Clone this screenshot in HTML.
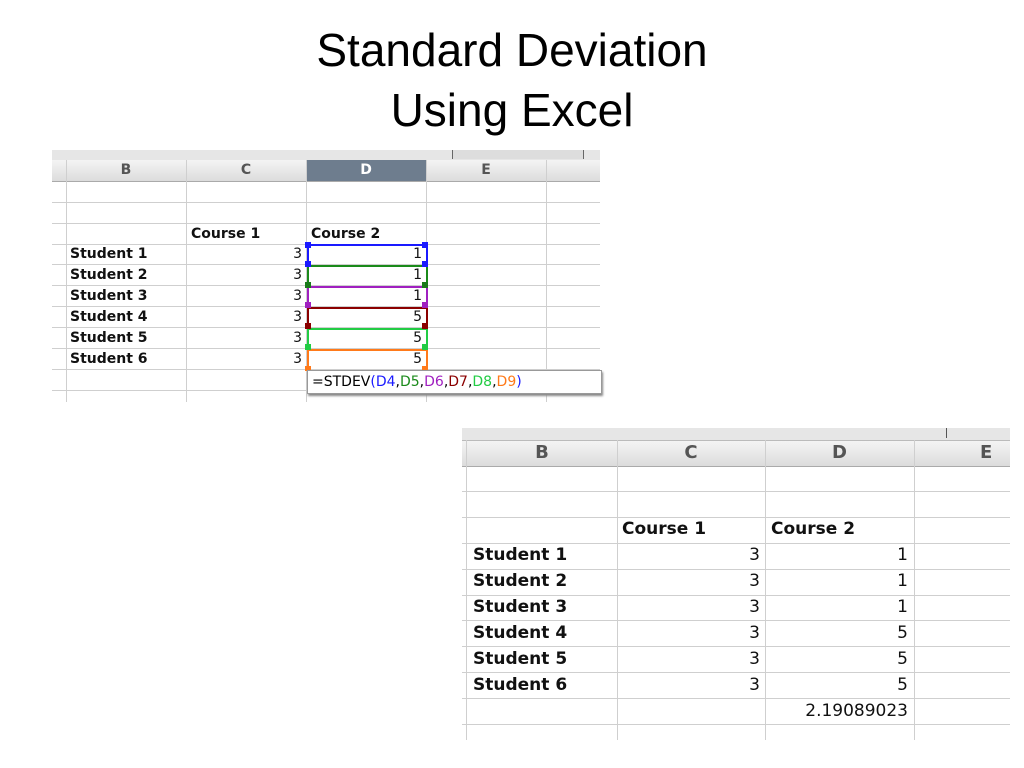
<!DOCTYPE html>
<html><head><meta charset="utf-8"><style>
body{margin:0;width:1024px;height:768px;background:#fff;position:relative;overflow:hidden;font-family:"Liberation Sans",sans-serif}
.t{position:absolute;left:0;width:1024px;text-align:center;font-size:46px;color:#000;line-height:50px}
.a{position:absolute}
.h{position:absolute;background:#cfcfcf}
.v{position:absolute;background:#cfcfcf}
.b{position:absolute;font-weight:bold;color:#111;white-space:nowrap;font-family:"DejaVu Sans",sans-serif}
.n{position:absolute;color:#111;text-align:right;white-space:nowrap;font-family:"DejaVu Sans",sans-serif}
</style></head><body>
<div class="t" style="top:25px">Standard Deviation</div>
<div class="t" style="top:85px">Using Excel</div>

<!-- sheet 1 -->
<div class="a" style="left:52px;top:150px;width:548px;height:10px;background:#e6e6e6"></div>
<div class="a" style="left:452px;top:150px;width:130px;height:9px;border-left:1px solid #666;border-right:1px solid #666;background:#ddd"></div>
<div class="a" style="left:52px;top:160px;width:548px;height:21px;background:linear-gradient(#f4f4f4,#dcdcdc);border-bottom:1px solid #aaa"></div>
<div class="a" style="left:306px;top:160px;width:120px;height:21px;background:#6e7d8e"></div>
<div class="b" style="left:66px;top:162px;width:120px;text-align:center;font-size:14px;color:#555">B</div>
<div class="b" style="left:186px;top:162px;width:120px;text-align:center;font-size:14px;color:#555">C</div>
<div class="b" style="left:306px;top:162px;width:120px;text-align:center;font-size:14px;color:#fff">D</div>
<div class="b" style="left:426px;top:162px;width:120px;text-align:center;font-size:14px;color:#555">E</div>
<div class="v" style="left:66px;top:160px;width:1px;height:242px"></div>
<div class="v" style="left:186px;top:160px;width:1px;height:242px"></div>
<div class="v" style="left:306px;top:160px;width:1px;height:242px"></div>
<div class="v" style="left:426px;top:160px;width:1px;height:242px"></div>
<div class="v" style="left:546px;top:160px;width:1px;height:242px"></div>
<div class="h" style="left:52px;top:202px;width:548px;height:1px"></div>
<div class="h" style="left:52px;top:223px;width:548px;height:1px"></div>
<div class="h" style="left:52px;top:244px;width:548px;height:1px"></div>
<div class="h" style="left:52px;top:264px;width:548px;height:1px"></div>
<div class="h" style="left:52px;top:285px;width:548px;height:1px"></div>
<div class="h" style="left:52px;top:306px;width:548px;height:1px"></div>
<div class="h" style="left:52px;top:327px;width:548px;height:1px"></div>
<div class="h" style="left:52px;top:348px;width:548px;height:1px"></div>
<div class="h" style="left:52px;top:369px;width:548px;height:1px"></div>
<div class="h" style="left:52px;top:390px;width:548px;height:1px"></div>
<div class="b" style="left:191px;top:226px;font-size:14px">Course 1</div>
<div class="b" style="left:311px;top:226px;font-size:14px">Course 2</div>
<div class="b" style="left:70px;top:246px;font-size:14px">Student 1</div>
<div class="b" style="left:70px;top:267px;font-size:14px">Student 2</div>
<div class="b" style="left:70px;top:288px;font-size:14px">Student 3</div>
<div class="b" style="left:70px;top:309px;font-size:14px">Student 4</div>
<div class="b" style="left:70px;top:330px;font-size:14px">Student 5</div>
<div class="b" style="left:70px;top:351px;font-size:14px">Student 6</div>
<div class="a" style="left:307px;top:244px;width:117px;height:19px;border:2px solid #1a1aff"></div>
<div class="a" style="left:307px;top:265px;width:117px;height:19px;border:2px solid #1a8a1a"></div>
<div class="a" style="left:307px;top:286px;width:117px;height:19px;border:2px solid #a020c0"></div>
<div class="a" style="left:307px;top:307px;width:117px;height:19px;border:2px solid #8b0000"></div>
<div class="a" style="left:307px;top:328px;width:117px;height:19px;border:2px solid #22cc44"></div>
<div class="a" style="left:307px;top:349px;width:117px;height:19px;border:2px solid #ff7a1a"></div>
<div class="n" style="left:186px;top:246px;width:116px;font-size:14px">3</div>
<div class="n" style="left:186px;top:267px;width:116px;font-size:14px">3</div>
<div class="n" style="left:186px;top:288px;width:116px;font-size:14px">3</div>
<div class="n" style="left:186px;top:309px;width:116px;font-size:14px">3</div>
<div class="n" style="left:186px;top:330px;width:116px;font-size:14px">3</div>
<div class="n" style="left:186px;top:351px;width:116px;font-size:14px">3</div>
<div class="n" style="left:306px;top:246px;width:116px;font-size:14px">1</div>
<div class="n" style="left:306px;top:267px;width:116px;font-size:14px">1</div>
<div class="n" style="left:306px;top:288px;width:116px;font-size:14px">1</div>
<div class="n" style="left:306px;top:309px;width:116px;font-size:14px">5</div>
<div class="n" style="left:306px;top:330px;width:116px;font-size:14px">5</div>
<div class="n" style="left:306px;top:351px;width:116px;font-size:14px">5</div>
<div class="a" style="left:305px;top:242px;width:6px;height:6px;background:#1a1aff"></div>
<div class="a" style="left:422px;top:242px;width:6px;height:6px;background:#1a1aff"></div>
<div class="a" style="left:305px;top:261px;width:6px;height:6px;background:#1a1aff"></div>
<div class="a" style="left:422px;top:261px;width:6px;height:6px;background:#1a1aff"></div>
<div class="a" style="left:305px;top:282px;width:6px;height:6px;background:#1a7a1a"></div>
<div class="a" style="left:422px;top:282px;width:6px;height:6px;background:#1a7a1a"></div>
<div class="a" style="left:305px;top:302px;width:6px;height:6px;background:#a020c0"></div>
<div class="a" style="left:422px;top:302px;width:6px;height:6px;background:#a020c0"></div>
<div class="a" style="left:305px;top:323px;width:6px;height:6px;background:#8b0000"></div>
<div class="a" style="left:422px;top:323px;width:6px;height:6px;background:#8b0000"></div>
<div class="a" style="left:305px;top:344px;width:6px;height:6px;background:#22cc44"></div>
<div class="a" style="left:422px;top:344px;width:6px;height:6px;background:#22cc44"></div>
<div class="a" style="left:305px;top:366px;width:6px;height:5px;background:#ff7a1a"></div>
<div class="a" style="left:422px;top:366px;width:6px;height:5px;background:#ff7a1a"></div>
<div class="a" style="left:307px;top:370px;width:289px;height:22px;background:#fff;border:1px solid #999;box-shadow:1px 2px 2px #888;font-size:14px;line-height:22px;padding-left:4px;white-space:nowrap;font-family:'DejaVu Sans',sans-serif">=STDEV<span style="color:#1a1aff">(D4</span>,<span style="color:#1a8a1a">D5</span>,<span style="color:#a020c0">D6</span>,<span style="color:#8b0000">D7</span>,<span style="color:#22cc44">D8</span>,<span style="color:#ff7a1a">D9</span><span style="color:#1a1aff">)</span></div>

<!-- sheet 2 -->
<div class="a" style="left:462px;top:428px;width:548px;height:12px;background:#e6e6e6"></div>
<div class="a" style="left:946px;top:428px;width:1px;height:10px;background:#555"></div>
<div class="a" style="left:462px;top:440px;width:548px;height:25px;background:linear-gradient(#f4f4f4,#dcdcdc);border-bottom:1px solid #aaa;border-top:1px solid #bbb"></div>
<div class="b" style="left:467px;top:442px;width:150px;text-align:center;font-size:18px;color:#555">B</div>
<div class="b" style="left:617px;top:442px;width:148px;text-align:center;font-size:18px;color:#555">C</div>
<div class="b" style="left:765px;top:442px;width:149px;text-align:center;font-size:18px;color:#555">D</div>
<div class="b" style="left:980px;top:442px;font-size:18px;color:#555">E</div>
<div class="v" style="left:466px;top:440px;width:1px;height:300px"></div>
<div class="v" style="left:617px;top:440px;width:1px;height:300px"></div>
<div class="v" style="left:765px;top:440px;width:1px;height:300px"></div>
<div class="v" style="left:914px;top:440px;width:1px;height:300px"></div>
<div class="h" style="left:462px;top:491px;width:548px;height:1px"></div>
<div class="h" style="left:462px;top:517px;width:548px;height:1px"></div>
<div class="h" style="left:462px;top:543px;width:548px;height:1px"></div>
<div class="h" style="left:462px;top:569px;width:548px;height:1px"></div>
<div class="h" style="left:462px;top:595px;width:548px;height:1px"></div>
<div class="h" style="left:462px;top:620px;width:548px;height:1px"></div>
<div class="h" style="left:462px;top:646px;width:548px;height:1px"></div>
<div class="h" style="left:462px;top:672px;width:548px;height:1px"></div>
<div class="h" style="left:462px;top:698px;width:548px;height:1px"></div>
<div class="h" style="left:462px;top:724px;width:548px;height:1px"></div>
<div class="b" style="left:622px;top:519px;font-size:17px">Course 1</div>
<div class="b" style="left:771px;top:519px;font-size:17px">Course 2</div>
<div class="b" style="left:473px;top:545px;font-size:17px">Student 1</div>
<div class="b" style="left:473px;top:571px;font-size:17px">Student 2</div>
<div class="b" style="left:473px;top:597px;font-size:17px">Student 3</div>
<div class="b" style="left:473px;top:623px;font-size:17px">Student 4</div>
<div class="b" style="left:473px;top:649px;font-size:17px">Student 5</div>
<div class="b" style="left:473px;top:675px;font-size:17px">Student 6</div>
<div class="n" style="left:617px;top:545px;width:143px;font-size:17px">3</div>
<div class="n" style="left:617px;top:571px;width:143px;font-size:17px">3</div>
<div class="n" style="left:617px;top:597px;width:143px;font-size:17px">3</div>
<div class="n" style="left:617px;top:623px;width:143px;font-size:17px">3</div>
<div class="n" style="left:617px;top:649px;width:143px;font-size:17px">3</div>
<div class="n" style="left:617px;top:675px;width:143px;font-size:17px">3</div>
<div class="n" style="left:765px;top:545px;width:143px;font-size:17px">1</div>
<div class="n" style="left:765px;top:571px;width:143px;font-size:17px">1</div>
<div class="n" style="left:765px;top:597px;width:143px;font-size:17px">1</div>
<div class="n" style="left:765px;top:623px;width:143px;font-size:17px">5</div>
<div class="n" style="left:765px;top:649px;width:143px;font-size:17px">5</div>
<div class="n" style="left:765px;top:675px;width:143px;font-size:17px">5</div>
<div class="n" style="left:765px;top:701px;width:143px;font-size:17px">2.19089023</div>
</body></html>
